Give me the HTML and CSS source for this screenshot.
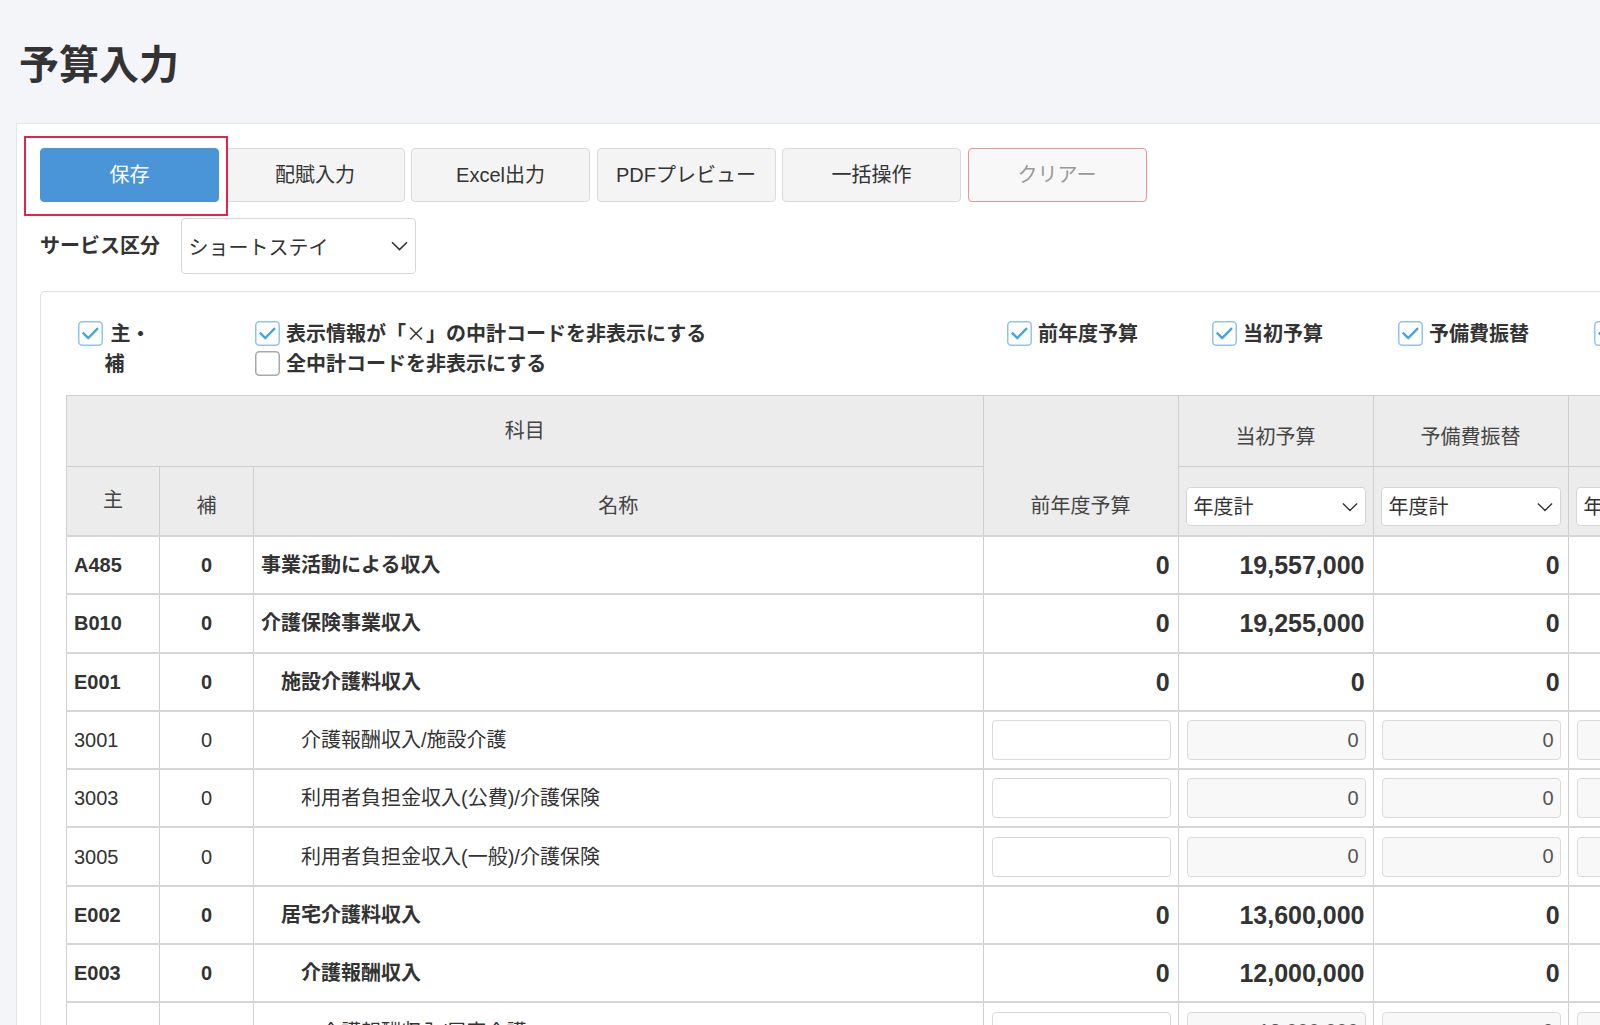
FILE: index.html
```html
<!DOCTYPE html>
<html lang="ja">
<head>
<meta charset="utf-8">
<title>予算入力</title>
<link rel="stylesheet" href="styles.css">
</head>
<body>
<div class="page">
  <h1 class="title">予算入力</h1>
  <div class="card">
    <div class="toolbar">
      <div class="save-wrap">
        <button class="btn btn-primary">保存</button>
        <span class="highlight"></span>
      </div>
      <button class="btn">配賦入力</button>
      <button class="btn">Excel出力</button>
      <button class="btn">PDFプレビュー</button>
      <button class="btn">一括操作</button>
      <button class="btn btn-clear">クリアー</button>
    </div>

    <div class="service-row">
      <span class="service-label">サービス区分</span>
      <div class="select select-service">
        <span>ショートステイ</span>
        <svg class="chev" viewBox="0 0 17 10"><path d="M1 1.2 L8.5 8.6 L16 1.2" fill="none" stroke="#333" stroke-width="1.6"/></svg>
      </div>
    </div>

    <div class="panel">
      <div class="options">
        <div class="opt-item opt-1">
          <svg class="cb" viewBox="0 0 25 25"><rect x="0.75" y="0.75" width="23.5" height="23.5" rx="3.5" fill="#fff" stroke="#8fc5ee" stroke-width="1.5"/><path d="M4.8 11.6 L10.2 17 L20 7.2" fill="none" stroke="#45a3e6" stroke-width="2.4"/></svg>
          <span class="opt-text opt-text-1">主・<br>補</span>
        </div>
        <div class="opt-item opt-2">
          <div class="opt-line">
            <svg class="cb" viewBox="0 0 25 25"><rect x="0.75" y="0.75" width="23.5" height="23.5" rx="3.5" fill="#fff" stroke="#8fc5ee" stroke-width="1.5"/><path d="M4.8 11.6 L10.2 17 L20 7.2" fill="none" stroke="#45a3e6" stroke-width="2.4"/></svg>
            <span class="opt-text">表示情報が「<span class="cjk">×</span>」の中計コードを非表示にする</span>
          </div>
          <div class="opt-line">
            <svg class="cb" viewBox="0 0 25 25"><rect x="0.75" y="0.75" width="23.5" height="23.5" rx="3.5" fill="#fff" stroke="#a9a9a9" stroke-width="1.5"/></svg>
            <span class="opt-text">全中計コードを非表示にする</span>
          </div>
        </div>
        <div class="opt-item opt-3">
          <div class="opt-line">
            <svg class="cb" viewBox="0 0 25 25"><rect x="0.75" y="0.75" width="23.5" height="23.5" rx="3.5" fill="#fff" stroke="#8fc5ee" stroke-width="1.5"/><path d="M4.8 11.6 L10.2 17 L20 7.2" fill="none" stroke="#45a3e6" stroke-width="2.4"/></svg>
            <span class="opt-text">前年度予算</span>
          </div>
        </div>
        <div class="opt-item opt-4">
          <div class="opt-line">
            <svg class="cb" viewBox="0 0 25 25"><rect x="0.75" y="0.75" width="23.5" height="23.5" rx="3.5" fill="#fff" stroke="#8fc5ee" stroke-width="1.5"/><path d="M4.8 11.6 L10.2 17 L20 7.2" fill="none" stroke="#45a3e6" stroke-width="2.4"/></svg>
            <span class="opt-text">当初予算</span>
          </div>
        </div>
        <div class="opt-item opt-5">
          <div class="opt-line">
            <svg class="cb" viewBox="0 0 25 25"><rect x="0.75" y="0.75" width="23.5" height="23.5" rx="3.5" fill="#fff" stroke="#8fc5ee" stroke-width="1.5"/><path d="M4.8 11.6 L10.2 17 L20 7.2" fill="none" stroke="#45a3e6" stroke-width="2.4"/></svg>
            <span class="opt-text">予備費振替</span>
          </div>
        </div>
        <div class="opt-item opt-6">
          <div class="opt-line">
            <svg class="cb" viewBox="0 0 25 25"><rect x="0.75" y="0.75" width="23.5" height="23.5" rx="3.5" fill="#fff" stroke="#8fc5ee" stroke-width="1.5"/><path d="M4.8 11.6 L10.2 17 L20 7.2" fill="none" stroke="#45a3e6" stroke-width="2.4"/></svg>
          </div>
        </div>
      </div>

      <table class="grid">
        <colgroup>
          <col class="c-main"><col class="c-sub"><col class="c-name">
          <col class="c-amt"><col class="c-amt"><col class="c-amt"><col class="c-amt">
        </colgroup>
        <thead>
          <tr class="h1">
            <th colspan="3" class="th-mid">科目</th>
            <th rowspan="2" class="th-bottom">前年度予算</th>
            <th class="th-top">当初予算</th>
            <th class="th-top">予備費振替</th>
            <th class="th-top"></th>
          </tr>
          <tr class="h2">
            <th class="th-bottom th-main">主</th>
            <th class="th-bottom">補</th>
            <th class="th-bottom">名称</th>
            <th class="th-sel"><div class="select select-cell"><span>年度計</span><svg class="chev chev-sm" viewBox="0 0 17 10"><path d="M1 1.2 L8.5 8.6 L16 1.2" fill="none" stroke="#333" stroke-width="1.5"/></svg></div></th>
            <th class="th-sel"><div class="select select-cell"><span>年度計</span><svg class="chev chev-sm" viewBox="0 0 17 10"><path d="M1 1.2 L8.5 8.6 L16 1.2" fill="none" stroke="#333" stroke-width="1.5"/></svg></div></th>
            <th class="th-sel"><div class="select select-cell"><span class="clip-text">年</span></div></th>
          </tr>
        </thead>
        <tbody>
          <tr class="sum">
            <td class="code">A485</td><td class="sub">0</td><td class="name lv0">事業活動による収入</td>
            <td class="num">0</td><td class="num">19,557,000</td><td class="num">0</td><td class="num"></td>
          </tr>
          <tr class="sum">
            <td class="code">B010</td><td class="sub">0</td><td class="name lv0">介護保険事業収入</td>
            <td class="num">0</td><td class="num">19,255,000</td><td class="num">0</td><td class="num"></td>
          </tr>
          <tr class="sum">
            <td class="code">E001</td><td class="sub">0</td><td class="name lv1">施設介護料収入</td>
            <td class="num">0</td><td class="num">0</td><td class="num">0</td><td class="num"></td>
          </tr>
          <tr class="item">
            <td class="code">3001</td><td class="sub">0</td><td class="name lv2">介護報酬収入/施設介護</td>
            <td class="inp"><input class="field" type="text" value=""></td>
            <td class="inp"><input class="field ro" type="text" value="0" readonly></td>
            <td class="inp"><input class="field ro" type="text" value="0" readonly></td>
            <td class="inp"><input class="field ro" type="text" value="" readonly></td>
          </tr>
          <tr class="item">
            <td class="code">3003</td><td class="sub">0</td><td class="name lv2">利用者負担金収入(公費)/介護保険</td>
            <td class="inp"><input class="field" type="text" value=""></td>
            <td class="inp"><input class="field ro" type="text" value="0" readonly></td>
            <td class="inp"><input class="field ro" type="text" value="0" readonly></td>
            <td class="inp"><input class="field ro" type="text" value="" readonly></td>
          </tr>
          <tr class="item">
            <td class="code">3005</td><td class="sub">0</td><td class="name lv2">利用者負担金収入(一般)/介護保険</td>
            <td class="inp"><input class="field" type="text" value=""></td>
            <td class="inp"><input class="field ro" type="text" value="0" readonly></td>
            <td class="inp"><input class="field ro" type="text" value="0" readonly></td>
            <td class="inp"><input class="field ro" type="text" value="" readonly></td>
          </tr>
          <tr class="sum">
            <td class="code">E002</td><td class="sub">0</td><td class="name lv1">居宅介護料収入</td>
            <td class="num">0</td><td class="num">13,600,000</td><td class="num">0</td><td class="num"></td>
          </tr>
          <tr class="sum">
            <td class="code">E003</td><td class="sub">0</td><td class="name lv2">介護報酬収入</td>
            <td class="num">0</td><td class="num">12,000,000</td><td class="num">0</td><td class="num"></td>
          </tr>
          <tr class="item">
            <td class="code">3007</td><td class="sub">0</td><td class="name lv3">介護報酬収入/居宅介護</td>
            <td class="inp"><input class="field" type="text" value=""></td>
            <td class="inp"><input class="field ro" type="text" value="12,000,000" readonly></td>
            <td class="inp"><input class="field ro" type="text" value="0" readonly></td>
            <td class="inp"><input class="field ro" type="text" value="" readonly></td>
          </tr>
        </tbody>
      </table>
    </div>
  </div>
</div>
</body>
</html>
```

FILE: styles.css
```css
html, body {
  margin: 0;
  padding: 0;
  overflow: hidden;
  background: #f4f5f9;
}

body {
  width: 1600px;
  height: 1025px;
  font-family: "Liberation Sans", "Noto Sans CJK JP", sans-serif;
  font-size: 20px;
  color: #333;
}

.page {
  width: 1600px;
  height: 1025px;
  overflow: hidden;
}

.title {
  margin: 0;
  padding: 41px 0 0 19px;
  font-size: 40px;
  line-height: 48px;
  font-weight: bold;
  color: #333;
}

.card {
  margin: 34px 0 0 16px;
  width: 1800px;
  height: 1100px;
  background: #fff;
  border-top: 1px solid #e3e5e9;
  border-left: 1px solid #e3e5e9;
  padding: 24px 0 0 23px;
  box-sizing: border-box;
}

/* toolbar */
.toolbar {
  display: flex;
  gap: 6.5px;
}

.save-wrap {
  position: relative;
  display: flex;
}

.btn {
  width: 179px;
  height: 54px;
  border: 1px solid #dadada;
  border-radius: 4px;
  background: #f4f4f4;
  font-family: "Liberation Sans", "Noto Sans CJK JP", sans-serif;
  font-size: 20px;
  color: #333;
  padding: 0 0 3px 0;
  display: flex;
  align-items: center;
  justify-content: center;
}

.btn-primary {
  background: #4a94d8;
  border-color: #4a94d8;
  color: #fff;
}

.btn-clear {
  background: #f8f8f8;
  border-color: #e79595;
  color: #999;
}

.highlight {
  position: absolute;
  left: -16px;
  top: -12px;
  width: 204px;
  height: 80px;
  border: 2px solid #e3244f;
  box-sizing: border-box;
  pointer-events: none;
}

/* service select */
.service-row {
  margin-top: 16px;
  display: flex;
  align-items: center;
}

.service-label {
  width: 140.5px;
  font-weight: bold;
  line-height: 30px;
}

.select {
  display: flex;
  align-items: center;
  justify-content: space-between;
  background: #fff;
  border: 1px solid #d6d6d6;
  border-radius: 4px;
  box-sizing: border-box;
  color: #333;
  font-weight: normal;
}

.select-service {
  width: 235px;
  height: 56px;
  padding: 0 7px 0 7px;
}

.chev {
  width: 17px;
  height: 10px;
  flex: none;
}

.chev-sm {
  width: 16px;
}

/* panel */
.panel {
  margin-top: 16.5px;
  border-top: 1px solid #e1e1e1;
  border-left: 1px solid #e1e1e1;
  border-top-left-radius: 5px;
  padding: 27px 0 0 25px;
}

.options {
  display: flex;
  align-items: flex-start;
  padding-left: 11.5px;
  height: 60px;
  margin-bottom: 16px;
  font-weight: bold;
  white-space: nowrap;
}

.opt-item {
  flex: none;
  display: flex;
  flex-direction: column;
}

.opt-1 {
  flex-direction: row;
  align-items: flex-start;
  width: 177.5px;
}

.opt-1 .cb {
  margin-top: 2.5px;
}

.opt-2 { width: 752px; }
.opt-3 { width: 205px; }
.opt-4 { width: 186px; }
.opt-5 { width: 196px; }
.opt-6 { width: 40px; }

.opt-line {
  display: flex;
  align-items: center;
  height: 30px;
}

.cb {
  width: 25px;
  height: 25px;
  flex: none;
  margin-right: 6px;
}

.opt-text {
  line-height: 30px;
}

.opt-text-1 {
  margin-left: -4px;
  text-indent: 6px;
}

.cjk {
  font-family: "Noto Sans CJK JP", sans-serif;
  font-weight: normal;
}

/* table */
.grid {
  border-collapse: collapse;
  table-layout: fixed;
  width: 1696px;
}

.c-main { width: 93px; }
.c-sub { width: 94px; }
.c-name { width: 729.5px; }
.c-amt { width: 195px; }

.grid th {
  background: #ececec;
  border: 1px solid #cfcfcf;
  font-weight: normal;
  color: #444;
  padding: 0;
  line-height: 30px;
}

.h1 { height: 71px; }
.h2 { height: 70px; }

.th-mid { vertical-align: middle; }

.th-top {
  vertical-align: bottom;
  padding-bottom: 14px !important;
}

.th-bottom {
  vertical-align: bottom;
  line-height: 39px !important;
  padding-bottom: 9px !important;
}

.th-main {
  padding-bottom: 15px !important;
}

.th-sel {
  vertical-align: bottom;
  padding: 0 7px 9px 7px !important;
}

.select-cell {
  width: 100%;
  height: 39px;
  padding: 0 7px 0 7px;
  text-align: left;
}

.grid td {
  border: 1px solid #cfcfcf;
  height: 56.3px;
  padding: 0;
  background: #fff;
  line-height: 30px;
  white-space: nowrap;
  overflow: hidden;
}

.grid tbody tr {
  border-top: 2px solid #d6d6d6;
}

.sum td {
  font-weight: bold;
}

.code {
  padding-left: 7px !important;
}

.sub {
  text-align: center;
}

.name.lv0 { padding-left: 7px !important; }
.name.lv1 { padding-left: 27px !important; }
.name.lv2 { padding-left: 47px !important; }
.name.lv3 { padding-left: 67px !important; }

.num {
  text-align: right;
  padding-right: 8px !important;
  font-size: 25px;
}

.inp {
  padding: 0 7px 0 8px !important;
}

.field {
  display: block;
  width: 100%;
  height: 40px;
  box-sizing: border-box;
  border: 1px solid #dadada;
  border-radius: 4px;
  background: #fff;
  font-family: "Liberation Sans", "Noto Sans CJK JP", sans-serif;
  font-size: 20px;
  color: #555;
  text-align: right;
  padding: 0 6px;
  outline: none;
}

.field.ro {
  background: #f8f8f8;
}
```
